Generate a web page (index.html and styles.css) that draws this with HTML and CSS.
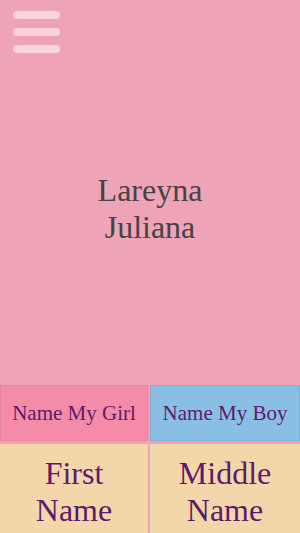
FILE: index.html
```html
<!DOCTYPE html>
<html lang="en">
<head>
    <meta charset="UTF-8">
    <meta name="viewport" content="width=device-width, initial-scale=1.0">
    <title>Baby Names</title>
    <link rel="stylesheet" href="styles.css">
</head>
<body>

<div class="app">
    <header class="top-bar">
        <button class="menu-btn" type="button" aria-label="Menu">
            <span class="bar"></span>
            <span class="bar"></span>
            <span class="bar"></span>
        </button>
    </header>

    <main class="hero">
        <div class="full-name">Lareyna<br>Juliana</div>
    </main>

    <div class="choices">
        <button type="button" class="choice girl">Name My Girl</button>
        <button type="button" class="choice boy">Name My Boy</button>
        <button type="button" class="pick">First<br>Name</button>
        <button type="button" class="pick">Middle<br>Name</button>
    </div>
</div>

</body>
</html>
```

FILE: styles.css
```css
* {
    box-sizing: border-box;
    margin: 0;
    padding: 0;
}

html, body {
    height: 100%;
}

body {
    background-color: #eea3b6;
    font-family: "Liberation Serif", "Times New Roman", serif;
    overflow: hidden;
}

.app {
    display: flex;
    flex-direction: column;
    min-height: 100%;
}

.top-bar {
    padding: 11px 0 0 13px;
    height: 62px;
}

.menu-btn {
    display: flex;
    flex-direction: column;
    gap: 9px;
    background: none;
    border: none;
    cursor: pointer;
}

.menu-btn .bar {
    display: block;
    width: 47px;
    height: 8px;
    border-radius: 4px;
    background-color: #f8d3dc;
}

.hero {
    height: 323px;
    display: flex;
    justify-content: center;
    align-items: center;
    padding-bottom: 30px;
}

.full-name {
    font-size: 32px;
    color: #444444;
    text-align: center;
}

.choices {
    display: grid;
    grid-template-columns: 148px 150px;
    column-gap: 2px;
    row-gap: 3px;
}

.choice {
    height: 56px;
    font-family: inherit;
    font-size: 21px;
    color: #5d1a6a;
    cursor: pointer;
}

.girl {
    background-color: #f48ba8;
    border: 1px solid #e3859f;
}

.boy {
    background-color: #89bfe5;
    border: 1px solid #7fb0d4;
}

.pick {
    background-color: #f3d7ab;
    border: none;
    font-family: inherit;
    font-size: 32px;
    color: #5d1a6a;
    padding: 11px 0;
    cursor: pointer;
}
```
